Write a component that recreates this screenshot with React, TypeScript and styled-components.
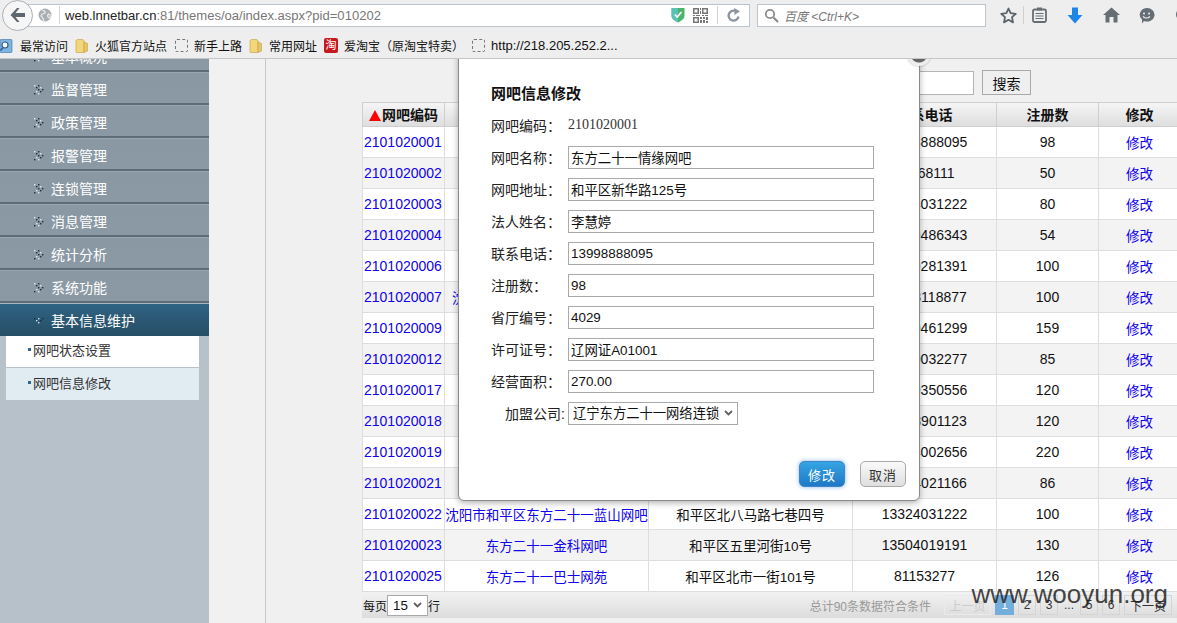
import React from "react";
import styled, { createGlobalStyle } from "styled-components";

const FONT = `"Liberation Sans", "Noto Sans CJK SC", sans-serif`;
const CHEVRON = `url("data:image/svg+xml,%3Csvg xmlns='http://www.w3.org/2000/svg' width='9' height='6'%3E%3Cpath d='M1 1l3.5 3.5L8 1' fill='none' stroke='%23606060' stroke-width='1.8'/%3E%3C/svg%3E")`;

const Global = createGlobalStyle`
  html, body { margin: 0; padding: 0; height: 100%; overflow: hidden; background: #f0f0f0; }
  #root { height: 100%; }
  * { box-sizing: border-box; }
  body { font-family: ${FONT}; font-size: 14px; color: #111; }
`;

const Page = styled.div`
  height: 623px;
  display: flex;
  flex-direction: column;
  overflow: hidden;
`;

/* browser chrome */
const Toolbar = styled.div`
  height: 30px;
  flex: none;
  display: flex;
  align-items: center;
  background: #eeeeee;
`;
const BackButton = styled.div`
  width: 31px;
  height: 31px;
  flex: none;
  margin-left: 2px;
  margin-right: -5px;
  border-radius: 50%;
  background: #f6f6f6;
  border: 1px solid #a9b0b7;
  display: flex;
  align-items: center;
  justify-content: center;
  position: relative;
  z-index: 2;
`;
const UrlBar = styled.div`
  width: 722px;
  height: 23px;
  flex: none;
  background: #fff;
  border: 1px solid #bcc5ce;
  display: flex;
  align-items: center;
  padding-left: 9px;
`;
const UrlDivider = styled.span<{ $l?: number; $r?: number }>`
  width: 1px;
  height: 18px;
  background: #d4d4d4;
  flex: none;
  margin: 0 ${(p) => p.$r ?? 5}px 0 ${(p) => p.$l ?? 7}px;
`;
const UrlText = styled.div`
  font-size: 13.05px;
  color: #777;
  white-space: nowrap;
  flex: 1;
  b { font-weight: 400; color: #222; }
`;
const UrlIcons = styled.div`
  display: flex;
  align-items: center;
  gap: 8px;
  padding-right: 8px;
`;
const SearchBar = styled.div`
  width: 229px;
  height: 23px;
  flex: none;
  margin-left: 7px;
  background: #fff;
  border: 1px solid #bcc5ce;
  display: flex;
  align-items: center;
  gap: 5px;
  padding-left: 6px;
`;
const SearchHint = styled.span`
  font-size: 12px;
  font-style: italic;
  color: #777;
`;
const ToolIcons = styled.div`
  display: flex;
  align-items: center;
  margin-left: 14px;
`;
const ToolSlot = styled.span<{ $w: number }>`
  width: ${(p) => p.$w}px;
  display: flex;
  justify-content: flex-start;
  align-items: center;
  flex: none;
`;
const ToolSep = styled.span`
  width: 1px;
  height: 18px;
  background: #d0d0d0;
  margin-right: 8px;
  flex: none;
`;

const BookmarkBar = styled.div`
  height: 29px;
  flex: none;
  display: flex;
  align-items: center;
  gap: 7px;
  background: #eeeeee;
  border-bottom: 1px solid #c4c6c8;
  padding-top: 3px;
  overflow: hidden;
`;
const Bookmark = styled.div<{ $url?: boolean }>`
  display: flex;
  align-items: center;
  gap: 6px;
  font-size: ${(p) => (p.$url ? "13px" : "12px")};
  color: #111;
  white-space: nowrap;
`;
const BookmarkIconBox = styled.span`
  width: 14px;
  height: 14px;
  flex: none;
  display: flex;
  align-items: center;
  justify-content: center;
`;
const DashedIcon = styled.span`
  width: 13px;
  height: 13px;
  border: 1px dashed #777;
  border-radius: 2px;
  display: block;
`;
const TaoIcon = styled.span`
  width: 15px;
  height: 15px;
  background: #c8181f;
  color: #fff;
  font-size: 11px;
  line-height: 15px;
  text-align: center;
  border-radius: 2px;
  display: block;
`;

/* page body */
const Body = styled.div`
  flex: 1;
  min-height: 0;
  display: flex;
  position: relative;
  overflow: hidden;
  background: #f0f0f0;
`;
const Sidebar = styled.nav`
  width: 209px;
  flex: none;
  background: #b6c1ca;
  overflow: hidden;
`;
const Menu = styled.div`
  margin-top: -20px;
`;
const MenuItem = styled.div<{ $active?: boolean }>`
  height: 33px;
  display: flex;
  align-items: center;
  padding: 2px 0 0 33px;
  gap: 7px;
  font-size: 14px;
  color: #fff;
  background: ${(p) =>
    p.$active
      ? "linear-gradient(#2f6382, #284f68)"
      : "linear-gradient(#8a98a3, #8b99a4)"};
  border-top: 1px solid ${(p) => (p.$active ? "#aab6c0" : "#9aa6af")};
  border-bottom: 2px solid ${(p) => (p.$active ? "#284f68" : "#5c6c79")};
`;
const SubMenu = styled.div`
  margin: 0 10px 0 6px;
`;
const SubItem = styled.div<{ $current?: boolean }>`
  height: 32px;
  display: flex;
  align-items: center;
  padding: 0 0 4px 22px;
  font-size: 13px;
  color: #333;
  background: ${(p) => (p.$current ? "#e1ecf2" : "#fff")};
  border-bottom: ${(p) => (p.$current ? "none" : "1px solid #b9c2c8")};
  &::before {
    content: "";
    width: 3px;
    height: 3px;
    background: #33658a;
    margin-right: 2px;
    flex: none;
  }
`;
const Gutter = styled.div`
  width: 57px;
  flex: none;
  border-right: 1px solid #c4c8cc;
  background: #f1f1f1;
`;
const Content = styled.main`
  flex: 1;
  min-width: 0;
  padding: 11px 0 0 96px;
  overflow: hidden;
`;
const SearchRow = styled.div`
  width: 669px;
  height: 32px;
  display: flex;
  justify-content: flex-end;
  align-items: flex-start;
  gap: 8px;
`;
const SearchInput = styled.input`
  width: 100px;
  height: 24px;
  margin-top: 1px;
  background: #fff;
  border: 1px solid #b5b5b5;
`;
const SearchButton = styled.button`
  width: 49px;
  height: 25px;
  background: #efefef;
  border: 1px solid #aaa;
  font: 14px ${FONT};
  color: #111;
  padding: 0;
`;
const Table = styled.table`
  width: 819px;
  table-layout: fixed;
  border-collapse: separate;
  border-spacing: 0;
  background: #fff;
`;
const Th = styled.th<{ $w: number }>`
  width: ${(p) => p.$w}px;
  height: 25px;
  padding: 0 0 2px;
  font-size: 14px;
  font-weight: 700;
  text-align: center;
  color: #111;
  background: linear-gradient(#f6f5f5, #dedede);
  border-top: 1px solid #cfcfcf;
  border-right: 1px solid #cfcfcf;
  border-bottom: 1px solid #cfcfcf;
  &:first-child { border-left: 1px solid #cfcfcf; }
`;
const SortMark = styled.span`
  display: inline-block;
  width: 0;
  height: 0;
  margin-right: 1px;
  border-left: 6px solid transparent;
  border-right: 6px solid transparent;
  border-bottom: 11px solid #f00;
  vertical-align: -1px;
`;
const Tr = styled.tr<{ $even: boolean }>`
  background: ${(p) => (p.$even ? "#f3f3f3" : "#fff")};
`;
const Td = styled.td<{ $left?: boolean; $cjk?: boolean }>`
  height: 31px;
  padding: 0 0 0 ${(p) => (p.$left ? "1px" : "0")};
  font-size: ${(p) => (p.$cjk ? "13.5px" : "14px")};
  white-space: nowrap;
  overflow: hidden;
  text-align: ${(p) => (p.$left ? "left" : "center")};
  border-right: 1px solid #dedede;
  border-bottom: 1px solid #dedede;
  &:first-child { border-left: 1px solid #dedede; }
`;
const RowLink = styled.a`
  color: #0f00f0;
  text-decoration: none;
`;
const Footer = styled.div`
  width: 819px;
  height: 26px;
  display: flex;
  align-items: center;
  padding-left: 1px;
  font-size: 12px;
  background: linear-gradient(#f2f2f2, #dcdcdc);
`;
const PageSize = styled.select`
  width: 41px;
  height: 21px;
  margin: 0;
  padding: 0 0 0 5px;
  appearance: none;
  font: 13.3px ${FONT};
  color: #111;
  background: #fff ${CHEVRON} no-repeat right 5px center;
  border: 1px solid #aaa;
`;
const Total = styled.span`
  margin-left: auto;
  font-size: 12px;
  color: #999;
  margin-right: 13px;
`;
const Pager = styled.div`
  display: flex;
  align-items: center;
  gap: 4px;
  margin-right: 9px;
`;
const PageButton = styled.span<{ $w?: number; $state?: "on" | "off" }>`
  width: ${(p) => p.$w ?? 18}px;
  height: 20px;
  flex: none;
  display: flex;
  align-items: center;
  justify-content: center;
  font-size: 12px;
  border: 1px solid
    ${(p) => (p.$state === "on" ? "#74aedd" : p.$state === "off" ? "#eaeaea" : "#d4d4d4")};
  background: ${(p) => (p.$state === "on" ? "#74aedd" : "transparent")};
  color: ${(p) => (p.$state === "on" ? "#fff" : p.$state === "off" ? "#ccc" : "#333")};
`;
const Ellipsis = styled.span`
  width: 14px;
  text-align: center;
  font-size: 12px;
  color: #333;
`;

/* dialog */
const Modal = styled.section`
  position: absolute;
  left: 458px;
  top: -20px;
  width: 462px;
  height: 462px;
  background: #fff;
  border: 1px solid #8a8a8a;
  border-radius: 6px;
  box-shadow: 0 2px 6px rgba(0, 0, 0, 0.3);
  padding: 38px 0 0 32px;
`;
const CloseDot = styled.span`
  position: absolute;
  right: -12px;
  top: 2px;
  width: 24px;
  height: 24px;
  border-radius: 50%;
  background: radial-gradient(circle, #666 0 8px, #eee 9px);
  box-shadow: 0 0 2px rgba(0, 0, 0, 0.4);
`;
const ModalTitle = styled.h2`
  margin: 0;
  height: 31px;
  line-height: 32px;
  font-size: 15px;
  font-weight: 700;
  color: #111;
`;
const Field = styled.div`
  height: 32px;
  display: flex;
  align-items: center;
`;
const FieldLabel = styled.label<{ $right?: boolean }>`
  width: 77px;
  flex: none;
  font-size: 14px;
  color: #222;
  text-align: ${(p) => (p.$right ? "right" : "left")};
  padding-right: ${(p) => (p.$right ? "3px" : "0")};
`;
const StaticValue = styled.span`
  font-family: "Liberation Serif", serif;
  font-size: 14px;
  color: #333;
`;
const FieldInput = styled.input`
  width: 306px;
  height: 23px;
  padding: 0 2px;
  background: #fff;
  border: 1px solid #aaa;
  font: 13.4px ${FONT};
  color: #111;
`;
const FieldSelect = styled.select`
  width: 170px;
  height: 23px;
  padding: 0 0 0 4px;
  appearance: none;
  background: #fff ${CHEVRON} no-repeat right 4px center;
  border: 1px solid #aaa;
  font: 13.3px ${FONT};
  color: #111;
`;
const ModalActions = styled.div`
  display: flex;
  justify-content: flex-end;
  gap: 15px;
  margin: 32px 13px 0 0;
`;
const PrimaryButton = styled.button`
  width: 46px;
  height: 26px;
  padding: 0;
  border: 1px solid #3f86c8;
  border-radius: 5px;
  background: linear-gradient(#35a4e4, #1f79c6);
  box-shadow: 0 0 4px rgba(60, 130, 220, 0.6);
  color: #fff;
  font: 13px ${FONT};
  letter-spacing: 1px;
`;
const GhostButton = styled.button`
  width: 46px;
  height: 26px;
  padding: 0;
  border: 1px solid #aaa;
  border-radius: 5px;
  background: linear-gradient(#fafafa, #dedede);
  color: #333;
  font: 13px ${FONT};
  letter-spacing: 1px;
`;
const Watermark = styled.div`
  position: absolute;
  right: 9px;
  bottom: 14px;
  font-size: 26px;
  line-height: 30px;
  color: rgba(35, 35, 35, 0.85);
  white-space: nowrap;
`;

/* drawings */
const Chevrons = ({ open }: { open?: boolean }) => (
  <svg width="11" height="11" viewBox="0 0 11 11" fill="#2c3a45">
    {open
      ? [[1, 3], [5, 3], [9, 3], [3, 5], [7, 5], [5, 7]].map(([x, y], i) => (
          <rect key={i} x={x} y={y} width="1.4" height="1.4" fill={i % 2 ? "#cfe0ea" : "#1a2d3a"} />
        ))
      : [[1, 1], [3, 3], [5, 5], [3, 7], [1, 9], [5, 1], [7, 3], [9, 5], [7, 7], [5, 9]].map(([x, y], i) => (
          <rect key={i} x={x} y={y} width="1.4" height="1.4" fill={i % 3 ? "#24313c" : "#e4e8eb"} />
        ))}
  </svg>
);
const FolderIcon = () => (
  <svg width="14" height="16" viewBox="0 0 14 16">
    <path d="M1 3.5 C1 2 2 1.5 3 1.5 L7 1.5 C8.5 1.5 9 2.5 9 3 L9 14.5 L1.5 14.5 C1 14.5 1 14 1 13.5 Z" fill="#f3d67a" stroke="#c7a94f" strokeWidth=".7" />
    <path d="M9 4 L12.5 5.5 L12.5 13 L9 14.5 Z" fill="#e8c560" stroke="#bfa04a" strokeWidth=".6" />
  </svg>
);
const SearchFolderIcon = () => (
  <svg width="14" height="16" viewBox="0 0 14 16">
    <rect x="0" y="1.5" width="12" height="13" rx="1" fill="#7fb3e0" stroke="#4a80b0" strokeWidth=".7" />
    <circle cx="5" cy="7" r="3" fill="#fff" stroke="#2f5f90" strokeWidth="1.2" />
    <path d="M3 9.5 L0.5 12.5" stroke="#2f5f90" strokeWidth="1.5" />
  </svg>
);

const bookmarks = [
  { t: "最常访问", i: <SearchFolderIcon /> },
  { t: "火狐官方站点", i: <FolderIcon /> },
  { t: "新手上路", i: <DashedIcon /> },
  { t: "常用网址", i: <FolderIcon /> },
  { t: "爱淘宝（原淘宝特卖）", i: <TaoIcon>淘</TaoIcon> },
  { t: "http://218.205.252.2...", i: <DashedIcon />, url: true },
];

const menu = ["基本概况", "监督管理", "政策管理", "报警管理", "连锁管理", "消息管理", "统计分析", "系统功能"];

const rows: [string, string, string, string, string][] = [
  ["2101020001", "东方二十一情缘网吧", "和平区新华路125号", "13998888095", "98"],
  ["2101020002", "东方二十一天缘网吧", "和平区南京街18号", "23168111", "50"],
  ["2101020003", "东方二十一星光网吧", "和平区太原街55号", "13904031222", "80"],
  ["2101020004", "东方二十一明月网吧", "和平区长白街12号", "13889486343", "54"],
  ["2101020006", "东方二十一时代网吧", "和平区三好街68号", "13940281391", "100"],
  ["2101020007", "沈阳市和平区东方二十一星网吧", "和平区砂阳路21号", "13898118877", "100"],
  ["2101020009", "东方二十一领航网吧", "和平区文化路33号", "13940461299", "159"],
  ["2101020012", "东方二十一飞扬网吧", "和平区民主路9号", "13700032277", "85"],
  ["2101020017", "东方二十一宏达网吧", "和平区北五马路7号", "13840350556", "120"],
  ["2101020018", "东方二十一盛世网吧", "和平区和平大街6号", "13998901123", "120"],
  ["2101020019", "东方二十一新星网吧", "和平区光荣街15号", "13504002656", "220"],
  ["2101020021", "东方二十一阳光网吧", "和平区集贤街40号", "13324021166", "86"],
  ["2101020022", "沈阳市和平区东方二十一蓝山网吧", "和平区北八马路七巷四号", "13324031222", "100"],
  ["2101020023", "东方二十一金科网吧", "和平区五里河街10号", "13504019191", "130"],
  ["2101020025", "东方二十一巴士网苑", "和平区北市一街101号", "81153277", "126"],
];

const fields: [string, string][] = [
  ["网吧名称：", "东方二十一情缘网吧"],
  ["网吧地址：", "和平区新华路125号"],
  ["法人姓名：", "李慧婷"],
  ["联系电话：", "13998888095"],
  ["注册数：", "98"],
  ["省厅编号：", "4029"],
  ["许可证号：", "辽网证A01001"],
  ["经营面积：", "270.00"],
];

export default function App() {
  return (
    <Page>
      <Global />
      <Toolbar>
        <BackButton>
          <svg width="18" height="16" viewBox="0 0 18 16">
            <path d="M8 1 L1.5 8 L8 15 L10.5 15 L6.5 10 L16 10 L16 6 L6.5 6 L10.5 1 Z" fill="#5d666e" />
          </svg>
        </BackButton>
        <UrlBar>
          <svg width="14" height="14" viewBox="0 0 14 14">
            <circle cx="7" cy="7" r="6.5" fill="#a9aeb3" />
            <path d="M4 2 C6 3 8 3 7 5 C5 6 3 6 3 8 C5 9 5 11 6 13 M10 6 C12 6 13 8 12 10 C10 10 9 8 10 6" fill="none" stroke="#e8e8e8" strokeWidth="1.3" />
          </svg>
          <UrlDivider />
          <UrlText>
            <b>web.lnnetbar.cn</b>:81/themes/oa/index.aspx?pid=010202
          </UrlText>
          <UrlIcons>
            <svg width="14" height="16" viewBox="0 0 14 16">
              <path d="M0.5 1 L13.5 1 L13.5 9 C13.5 12 10 14 7 15.5 C4 14 0.5 12 0.5 9 Z" fill="#4cb56a" />
              <path d="M0.5 1 L7 1 L7 15.5 C4 14 0.5 12 0.5 9 Z" fill="#5cc8d8" opacity=".7" />
              <path d="M3.8 7.5 L6.2 10 L10.5 5" fill="none" stroke="#fff" strokeWidth="1.7" />
            </svg>
            <svg width="15" height="15" viewBox="0 0 15 15" fill="#777">
              <path fillRule="evenodd" d="M0 0h6v6H0zM1.5 1.5v3h3v-3zM9 0h6v6H9zM10.5 1.5v3h3v-3zM0 9h6v6H0zM1.5 10.5v3h3v-3z" />
              <path d="M7 0h1v2H7zM7 3h1v3H7zM0 7h2v1H0zM3 7h4v1H3zM9 7h2v1H9zM12 7h3v1h-3zM7 9h2v2H7zM10 9h2v2h-2zM13 9h2v3h-2zM7 12h2v3H7zM10 12h2v3h-2zM13 13h2v2h-2z" />
            </svg>
            <UrlDivider $l={1} $r={0} />
            <svg width="15" height="15" viewBox="0 0 15 15">
              <path d="M12.5 8.5 A5 5 0 1 1 9.5 3" fill="none" stroke="#8d969e" strokeWidth="2.4" />
              <path d="M8 0 L14 3.2 L8.5 7 Z" fill="#8d969e" />
            </svg>
          </UrlIcons>
        </UrlBar>
        <SearchBar>
          <svg width="15" height="15" viewBox="0 0 15 15">
            <circle cx="6" cy="6" r="4.2" fill="none" stroke="#8b8b8b" strokeWidth="1.8" />
            <path d="M9.5 9.5 L14 14" stroke="#8b8b8b" strokeWidth="2.2" />
          </svg>
          <SearchHint>百度 &lt;Ctrl+K&gt;</SearchHint>
        </SearchBar>
        <ToolIcons>
          <ToolSlot $w={23}>
            <svg width="17" height="17" viewBox="0 0 17 17">
              <path d="M8.5 1.5 L10.6 6.2 L15.8 6.8 L12 10.2 L13 15.4 L8.5 12.8 L4 15.4 L5 10.2 L1.2 6.8 L6.4 6.2 Z" fill="none" stroke="#5c646b" strokeWidth="1.8" strokeLinejoin="round" />
            </svg>
          </ToolSlot>
          <ToolSep />
          <ToolSlot $w={35}>
            <svg width="15" height="16" viewBox="0 0 15 16">
              <rect x="1" y="2.5" width="13" height="12.5" rx="1.5" fill="none" stroke="#666e75" strokeWidth="1.8" />
              <rect x="5" y="0.5" width="5" height="3" fill="#666e75" />
              <path d="M3.5 6.5h8M3.5 9h8M3.5 11.5h8" stroke="#666e75" strokeWidth="1.2" />
            </svg>
          </ToolSlot>
          <ToolSlot $w={36}>
            <svg width="16" height="17" viewBox="0 0 16 17">
              <path d="M5 0.5 L11 0.5 L11 8 L15.5 8 L8 16.5 L0.5 8 L5 8 Z" fill="#1e87e6" />
            </svg>
          </ToolSlot>
          <ToolSlot $w={35}>
            <svg width="17" height="16" viewBox="0 0 17 16">
              <path d="M8.5 0.5 L17 8 L14.5 8 L14.5 15.5 L10.5 15.5 L10.5 10 L6.5 10 L6.5 15.5 L2.5 15.5 L2.5 8 L0 8 Z" fill="#666e75" />
            </svg>
          </ToolSlot>
          <ToolSlot $w={36}>
            <svg width="17" height="17" viewBox="0 0 17 17">
              <path d="M8.5 1 A7.5 6.8 0 1 1 6 14 L4 16.5 L4 12.6 A7.5 6.8 0 0 1 8.5 1 Z" fill="#666e75" />
              <circle cx="6" cy="6.5" r="1" fill="#eee" />
              <circle cx="11" cy="6.5" r="1" fill="#eee" />
              <path d="M5 9.5 C7 11.5 10 11.5 12 9.5" fill="none" stroke="#eee" strokeWidth="1.2" />
            </svg>
          </ToolSlot>
          <ToolSlot $w={3}>
            <svg width="3" height="17" viewBox="0 0 3 17">
              <circle cx="8.5" cy="7.5" r="6.5" fill="#666e75" />
            </svg>
          </ToolSlot>
        </ToolIcons>
      </Toolbar>
      <BookmarkBar>
        {bookmarks.map((b) => (
          <Bookmark key={b.t} $url={b.url}>
            <BookmarkIconBox>{b.i}</BookmarkIconBox>
            {b.t}
          </Bookmark>
        ))}
      </BookmarkBar>
      <Body>
        <Sidebar>
          <Menu>
            {menu.map((m) => (
              <MenuItem key={m}>
                <Chevrons />
                {m}
              </MenuItem>
            ))}
            <MenuItem $active>
              <Chevrons open />
              基本信息维护
            </MenuItem>
          </Menu>
          <SubMenu>
            <SubItem>网吧状态设置</SubItem>
            <SubItem $current>网吧信息修改</SubItem>
          </SubMenu>
        </Sidebar>
        <Gutter />
        <Content>
          <SearchRow>
            <SearchInput />
            <SearchButton>搜索</SearchButton>
          </SearchRow>
          <Table>
            <thead>
              <tr>
                <Th $w={83}>
                  <SortMark />网吧编码
                </Th>
                <Th $w={204}>网吧名称</Th>
                <Th $w={204}>网吧地址</Th>
                <Th $w={144}>联系电话</Th>
                <Th $w={102}>注册数</Th>
                <Th $w={82}>修改</Th>
              </tr>
            </thead>
            <tbody>
              {rows.map((r, i) => (
                <Tr key={r[0]} $even={i % 2 === 1}>
                  <Td $left>
                    <RowLink>{r[0]}</RowLink>
                  </Td>
                  <Td $cjk>
                    <RowLink>{r[1]}</RowLink>
                  </Td>
                  <Td $cjk>{r[2]}</Td>
                  <Td>{r[3]}</Td>
                  <Td>{r[4]}</Td>
                  <Td $cjk>
                    <RowLink>修改</RowLink>
                  </Td>
                </Tr>
              ))}
            </tbody>
          </Table>
          <Footer>
            每页
            <PageSize defaultValue="15">
              <option>15</option>
            </PageSize>
            行
            <Total>总计90条数据符合条件</Total>
            <Pager>
              <PageButton $w={47} $state="off">上一页</PageButton>
              <PageButton $w={19} $state="on">1</PageButton>
              <PageButton>2</PageButton>
              <PageButton>3</PageButton>
              <Ellipsis>...</Ellipsis>
              <PageButton>5</PageButton>
              <PageButton>6</PageButton>
              <PageButton $w={48}>下一页</PageButton>
            </Pager>
          </Footer>
        </Content>
        <Modal>
          <CloseDot />
          <ModalTitle>网吧信息修改</ModalTitle>
          <Field>
            <FieldLabel>网吧编码：</FieldLabel>
            <StaticValue>2101020001</StaticValue>
          </Field>
          {fields.map(([l, v]) => (
            <Field key={l}>
              <FieldLabel>{l}</FieldLabel>
              <FieldInput defaultValue={v} />
            </Field>
          ))}
          <Field>
            <FieldLabel $right>加盟公司:</FieldLabel>
            <FieldSelect defaultValue="辽宁东方二十一网络连锁">
              <option>辽宁东方二十一网络连锁</option>
            </FieldSelect>
          </Field>
          <ModalActions>
            <PrimaryButton>修改</PrimaryButton>
            <GhostButton>取消</GhostButton>
          </ModalActions>
        </Modal>
        <Watermark>www.wooyun.org</Watermark>
      </Body>
    </Page>
  );
}
